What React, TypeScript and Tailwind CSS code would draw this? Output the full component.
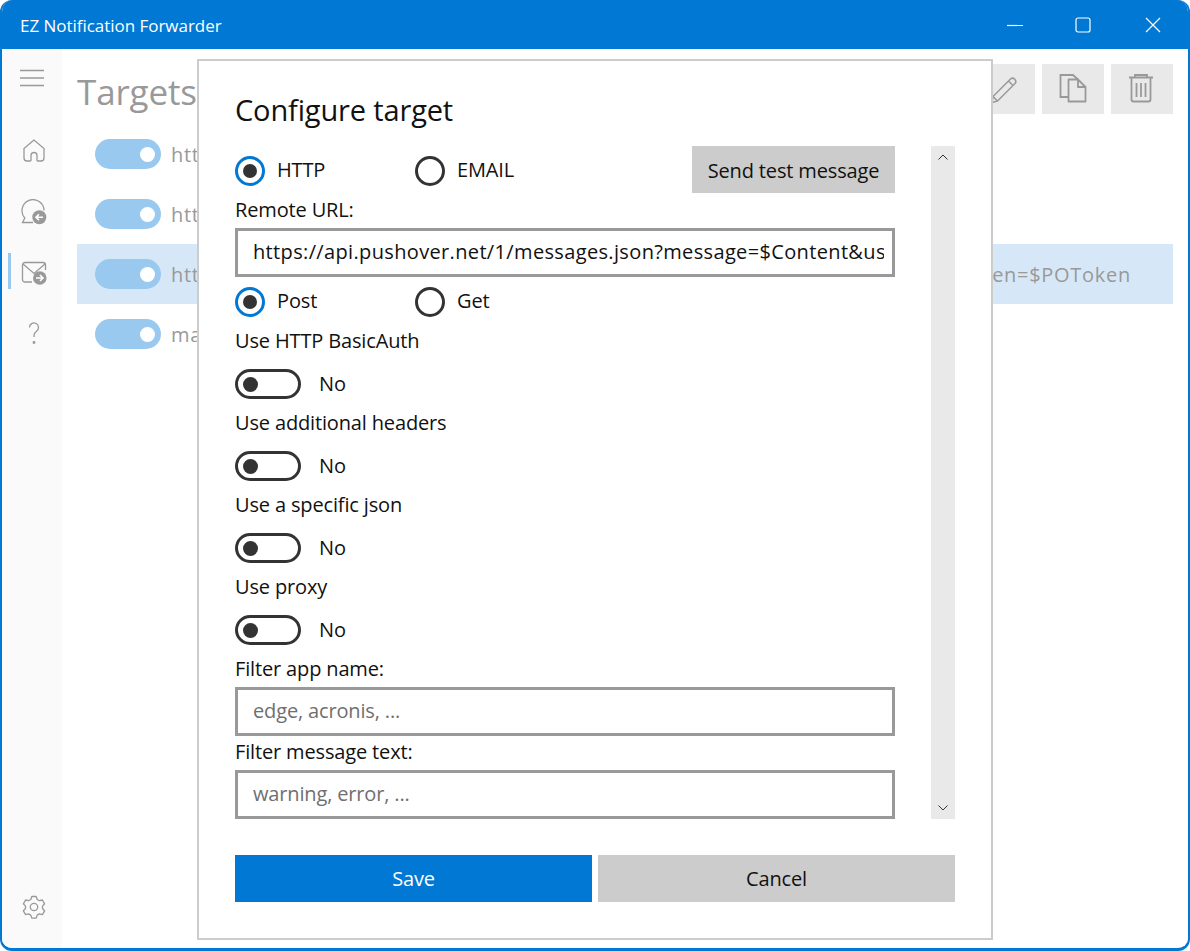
import type { FC, ReactNode } from 'react';

const targets = [
  { label: 'https://hooks.example.net/notify?text=$Content', selected: false },
  { label: 'https://ntfy.example.net/alerts?message=$Content', selected: false },
  { label: 'https://api.pushover.net/1/messages.json?message=$Content&user=$POUser&token=$POToken', selected: true },
  { label: 'mailto:me@example.net', selected: false },
];

const Icon: FC<{ size?: number; view?: number; children: ReactNode; className?: string }> = ({ size = 26, view = 26, children, className }) => (
  <svg width={size} height={size} viewBox={`0 0 ${view} ${view}`} fill="none" stroke="currentColor" strokeWidth={1.3} className={className}>
    {children}
  </svg>
);

const Radio: FC<{ label: string; checked?: boolean }> = ({ label, checked }) => (
  <div className="flex w-[180px] items-center gap-3">
    <span className={`flex h-[30px] w-[30px] items-center justify-center rounded-full border-[3px] ${checked ? 'border-[#0078d4]' : 'border-[#333333]'}`}>
      {checked && <span className="h-[14px] w-[14px] rounded-full bg-[#333333]" />}
    </span>
    <span className="pb-[1px]">{label}</span>
  </div>
);

const SwitchRow: FC<{ label: string }> = ({ label }) => (
  <div>
    <div className="flex h-[28px] items-center pt-[1px]">{label}</div>
    <div className="flex h-[54px] items-start gap-[18px] pt-[15px]">
      <span className="flex h-[30px] w-[66px] items-center rounded-full border-[3px] border-[#333333] pl-[5px]">
        <span className="h-[15px] w-[15px] rounded-full bg-[#333333]" />
      </span>
      <span className="leading-[30px]">No</span>
    </div>
  </div>
);

const FilterField: FC<{ label: string; placeholder: string; className?: string }> = ({ label, placeholder, className }) => (
  <div className={className}>
    <div className="flex h-[29px] items-center">{label}</div>
    <div className="mt-[4px] flex h-[49px] items-center border-[3px] border-[#999999] px-[15px] pb-[2px] text-[#6f6f6f]">{placeholder}</div>
  </div>
);

export default function App() {
  return (
    <div className="relative h-[951px] w-[1190px] overflow-hidden bg-white font-['Open_Sans','Noto_Sans',sans-serif] text-[20px] tracking-[-0.15px]">
      <div className="flex h-full flex-col overflow-hidden rounded-[12px] border-x-2 border-b-[3px] border-[#0078d4] bg-white">
        <header className="flex h-[49px] shrink-0 items-center justify-between bg-[#0078d4] text-white">
          <span className="pt-[3px] pl-[18px] text-[17px] tracking-[-0.03px]">EZ Notification Forwarder</span>
          <div className="flex items-center text-white">
            <div className="flex w-[68px] justify-center">
              <svg width="16" height="16" viewBox="0 0 16 16" stroke="currentColor" strokeWidth="1.2"><path d="M0 8.5h16" /></svg>
            </div>
            <div className="flex w-[68px] justify-center">
              <svg width="16" height="16" viewBox="0 0 16 16" fill="none" stroke="currentColor" strokeWidth="1.2"><rect x="1" y="1" width="14" height="14" rx="2" /></svg>
            </div>
            <div className="flex w-[71px] justify-center">
              <svg width="16" height="16" viewBox="0 0 16 16" stroke="currentColor" strokeWidth="1.2"><path d="M1 1l14 14M15 1L1 15" /></svg>
            </div>
          </div>
        </header>

        <div className="flex min-h-0 flex-1">
          <nav className="flex w-[60px] shrink-0 flex-col items-center bg-[#fafafa] pt-[20px] text-[#999999]">
            <svg width="26" height="18" viewBox="0 0 26 18" stroke="currentColor" strokeWidth="1.3"><path d="M1 1.5h24M1 9h24M1 16.5h24" /></svg>
            <div className="mt-[33px] flex h-[61px] w-full items-center justify-center pl-[4px]">
              <Icon>
                <path d="M13 2 3 10.500V20a3 3 0 0 0 3 3h3.200a.8.8 0 0 0 .8-.8v-4.700a3 3 0 0 1 6 0v4.700a.8.8 0 0 0 .8.8H20a3 3 0 0 0 3-3v-9.500z" />
              </Icon>
            </div>
            <div className="flex h-[61px] w-full items-center justify-center pl-[4px]">
              <Icon>
                <path d="M12 23.500H1.500L3.800 19A11 11 0 1 1 23 11.500" />
                <circle cx="18.300" cy="18.200" r="7" fill="#999999" stroke="none" />
                <path d="M22 18.200h-7M18 15.200l-3 3 3 3" stroke="#ffffff" strokeWidth="1.600" />
              </Icon>
            </div>
            <div className="relative flex h-[61px] w-full items-center justify-center pl-[4px]">
              <span className="absolute top-[11px] left-[6px] h-[36px] w-[3px] bg-[#99c9ef]" />
              <Icon>
                <path d="M11 22H4a2.500 2.500 0 0 1-2.500-2.500V5A2.500 2.500 0 0 1 4 2.500h18A2.500 2.500 0 0 1 24.500 5v5" />
                <path d="M2 4 13 13.500 24 4" />
                <circle cx="18.800" cy="18" r="6.800" fill="#999999" stroke="none" />
                <path d="M15 18h7M19 15l3 3-3 3" stroke="#ffffff" strokeWidth="1.600" />
              </Icon>
            </div>
            <div className="flex h-[59px] w-full items-center justify-center pl-[4px]">
              <Icon>
                <path d="M8.500 7.500a4.500 4.500 0 1 1 7 3.700c-1.700 1.200-2.500 2.300-2.500 4.300v1.500" />
                <circle cx="13" cy="22.500" r="0.800" fill="currentColor" />
              </Icon>
            </div>
            <div className="mt-auto mb-[28px] pl-[4px]">
              <Icon>
                <path d="M10.800 2.500h4.400l1 3 2.200 1.200 3-.7 2.200 3.800-2.100 2.300v2.400l2.100 2.300-2.200 3.800-3-.7-2.200 1.200-1 3h-4.400l-1-3-2.200-1.200-3 .7-2.200-3.800 2.100-2.300v-2.400L2.400 9.800l2.200-3.800 3 .7 2.200-1.200z" strokeLinejoin="round" />
                <circle cx="13" cy="13" r="3.700" />
              </Icon>
            </div>
          </nav>

          <main className="flex-1 pt-[15px] pr-[15px] pl-[15px] text-[#999999]">
            <div className="flex h-[50px] items-center justify-between">
              <h1 className="pt-[5px] text-[35px] leading-[50px]">Targets</h1>
              <div className="flex gap-[7px]">
                <button className="flex h-[50px] w-[62px] items-center justify-center bg-[#e9e9e9]">
                  <Icon size={30} view={30}>
                    <path d="M4 22.500 21.500 5a3.200 3.200 0 0 1 4.500 4.500L8.500 27 3 28.500zM4 22.500 8.500 27M19.500 7l4.500 4.500" strokeWidth="1.500" strokeLinejoin="round" />
                  </Icon>
                </button>
                <button className="flex h-[50px] w-[62px] items-center justify-center bg-[#e9e9e9]">
                  <Icon size={30} view={30}>
                    <path d="M10 23H2.500V1H15l5 4.500" strokeWidth="1.800" />
                    <path d="M10.500 5.500H20l7.500 7.500v14.500H10.500zM20 5.500V13h7.500" strokeWidth="1.800" strokeLinejoin="round" />
                  </Icon>
                </button>
                <button className="flex h-[50px] w-[62px] items-center justify-center bg-[#e9e9e9]">
                  <Icon size={30} view={30}>
                    <path d="M2 3.500h24M8 3.500V1h12v2.500M4.500 3.500V25.500a2 2 0 0 0 2 2h15a2 2 0 0 0 2-2V3.500M9.500 9v14M14 9v14M18.500 9v14" strokeWidth="1.800" />
                  </Icon>
                </button>
              </div>
            </div>
            <div className="mt-[10px]">
              {targets.map((t) => (
                <div key={t.label} className={`flex h-[60px] items-center gap-[10px] pl-[18px] ${t.selected ? 'bg-[#d6e8f7]' : ''}`}>
                  <span className="flex h-[30px] w-[66px] shrink-0 items-center justify-end rounded-full bg-[#99c9ef] pr-[6px]">
                    <span className="h-[15px] w-[15px] rounded-full bg-white" />
                  </span>
                  <span className="pt-[2px] tracking-[0.7px] whitespace-nowrap">{t.label}</span>
                </div>
              ))}
            </div>
          </main>
        </div>
      </div>

      {/* dialog lies over the dimmed page */}
      <div className="absolute top-[59px] left-[197px] flex h-[881px] w-[796px] flex-col border-2 border-[#cccccc] bg-white px-[36px] text-[#111111]">
        <h2 className="flex h-[85px] shrink-0 items-center pt-[11px] text-[29px] leading-none">Configure target</h2>
        <div className="flex h-[673px] shrink-0 justify-between">
          <div className="w-[660px]">
            <div className="flex h-[47px] items-center">
              <div className="flex pt-[2px]">
                <Radio label="HTTP" checked />
                <Radio label="EMAIL" />
              </div>
              <button className="ml-auto h-[47px] w-[203px] bg-[#cccccc] pt-[2px] text-center">Send test message</button>
            </div>
            <div className="flex h-[33px] items-center">Remote URL:</div>
            <div className="mt-[2px] flex h-[49px] items-center border-[3px] border-[#999999] pr-[8px] pb-[2px] pl-[15px]">
              <div className="w-full overflow-hidden tracking-[0.35px] whitespace-nowrap">
                https://api.pushover.net/1/messages.json?message=$Content&amp;user=$POUser&amp;token=$POToken
              </div>
            </div>
            <div className="flex h-[49px] items-center">
              <Radio label="Post" checked />
              <Radio label="Get" />
            </div>
            <SwitchRow label="Use HTTP BasicAuth" />
            <SwitchRow label="Use additional headers" />
            <SwitchRow label="Use a specific json" />
            <SwitchRow label="Use proxy" />
            <FilterField label="Filter app name:" placeholder="edge, acronis, ..." />
            <FilterField label="Filter message text:" placeholder="warning, error, ..." className="mt-[1px]" />
          </div>
          <div className="flex w-[24px] flex-col items-center justify-between bg-[#e9e9e9] py-[8px] text-[#333333]">
            <svg width="10" height="6" viewBox="0 0 10 6" fill="none" stroke="currentColor" strokeWidth="1"><path d="M.5 5.500 5 1l4.500 4.500" /></svg>
            <svg width="10" height="6" viewBox="0 0 10 6" fill="none" stroke="currentColor" strokeWidth="1"><path d="M.5.500 5 5l4.500-4.500" /></svg>
          </div>
        </div>
        <div className="mt-[36px] flex h-[47px] gap-[6px]">
          <button className="flex-1 bg-[#0078d4] text-white">Save</button>
          <button className="flex-1 bg-[#cccccc]">Cancel</button>
        </div>
      </div>
    </div>
  );
}
